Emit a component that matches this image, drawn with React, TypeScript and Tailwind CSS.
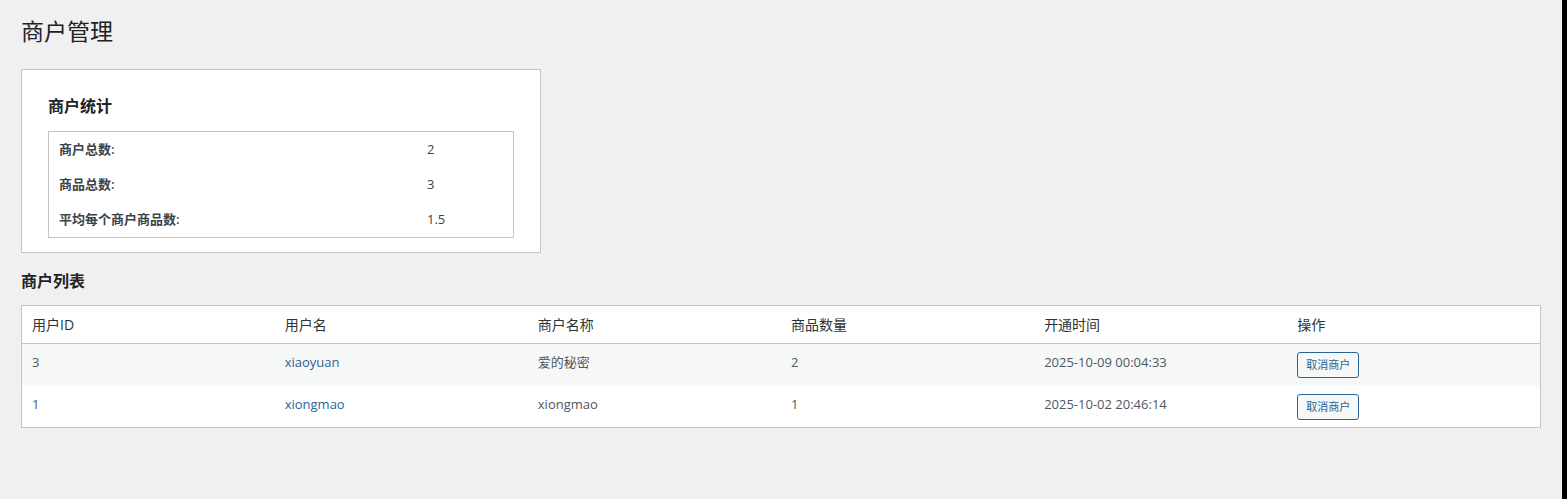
import { useState } from 'react';

interface Merchant {
  id: number;
  username: string;
  shopName: string;
  productCount: number;
  openedAt: string;
}

const merchants: Merchant[] = [
  { id: 3, username: 'xiaoyuan', shopName: '爱的秘密', productCount: 2, openedAt: '2025-10-09 00:04:33' },
  { id: 1, username: 'xiongmao', shopName: 'xiongmao', productCount: 1, openedAt: '2025-10-02 20:46:14' },
];

const font = { fontFamily: '"Open Sans", "Noto Sans CJK SC", sans-serif' };

export default function App() {
  const [rows, setRows] = useState(merchants);

  const stats = [
    { label: '商户总数:', value: '2' },
    { label: '商品总数:', value: '3' },
    { label: '平均每个商户商品数:', value: '1.5' },
  ];

  return (
    <div className="flex min-h-[499px] w-full bg-[#f0f0f1]" style={font}>
      <div className="flex-1 px-[21px] pt-[14px] pb-10">
        <h1 className="text-[23px] leading-[34px] font-normal text-[#1d2327]">商户管理</h1>

        <div className="mt-[21px] w-[520px] border border-[#c3c4c7] bg-white px-[26px] pt-[24px] pb-[14px]">
          <h2 className="text-[16px] leading-[24px] font-bold text-[#1d2327] mb-[13px]">商户统计</h2>
          <div className="border border-[#c3c4c7]">
            {stats.map((s) => (
              <div key={s.label} className="flex h-[35px] items-center pt-[1px] text-[13px] text-[#3c434a]">
                <div className="w-[378px] pl-[10px] font-semibold">{s.label}</div>
                <div>{s.value}</div>
              </div>
            ))}
          </div>
        </div>

        <h2 className="mt-[16px] text-[16px] leading-[24px] font-bold text-[#1d2327]">商户列表</h2>

        <table className="mt-[12px] w-full table-fixed border border-[#c3c4c7] bg-white text-left">
          <thead>
            <tr className="h-[38px] border-b border-[#c3c4c7] text-[14px] text-[#2c3338]">
              <th className="pl-[10px] font-normal">用户ID</th>
              <th className="pl-[10px] font-normal">用户名</th>
              <th className="pl-[10px] font-normal">商户名称</th>
              <th className="pl-[10px] font-normal">商品数量</th>
              <th className="pl-[10px] font-normal">开通时间</th>
              <th className="pl-[10px] font-normal">操作</th>
            </tr>
          </thead>
          <tbody>
            {rows.map((m, i) => (
              <tr key={m.id} className={`h-[42px] text-[13px] leading-[20px] text-[#50575e] ${i % 2 === 0 ? 'bg-[#f6f7f7]' : 'bg-white'}`}>
                <td className="pl-[10px] pt-[8px] align-top">{m.id}</td>
                <td className="pl-[10px] pt-[8px] align-top">
                  <a href="#" className="text-[#2a6496]">{m.username}</a>
                </td>
                <td className="pl-[10px] pt-[8px] align-top">{m.shopName}</td>
                <td className="pl-[10px] pt-[8px] align-top">{m.productCount}</td>
                <td className="pl-[10px] pt-[8px] align-top">{m.openedAt}</td>
                <td className="pl-[10px] pt-[8px] align-top">
                  <button
                    onClick={() => setRows(rows.filter((r) => r.id !== m.id))}
                    className="h-[26px] rounded-[3px] border border-[#2a6496] bg-[#f6f7f7] px-[8px] text-[11px] leading-[24px] text-[#2a6496]"
                  >
                    取消商户
                  </button>
                </td>
              </tr>
            ))}
          </tbody>
        </table>
      </div>
      <div className="w-[5px] shrink-0 bg-black" />
    </div>
  );
}
